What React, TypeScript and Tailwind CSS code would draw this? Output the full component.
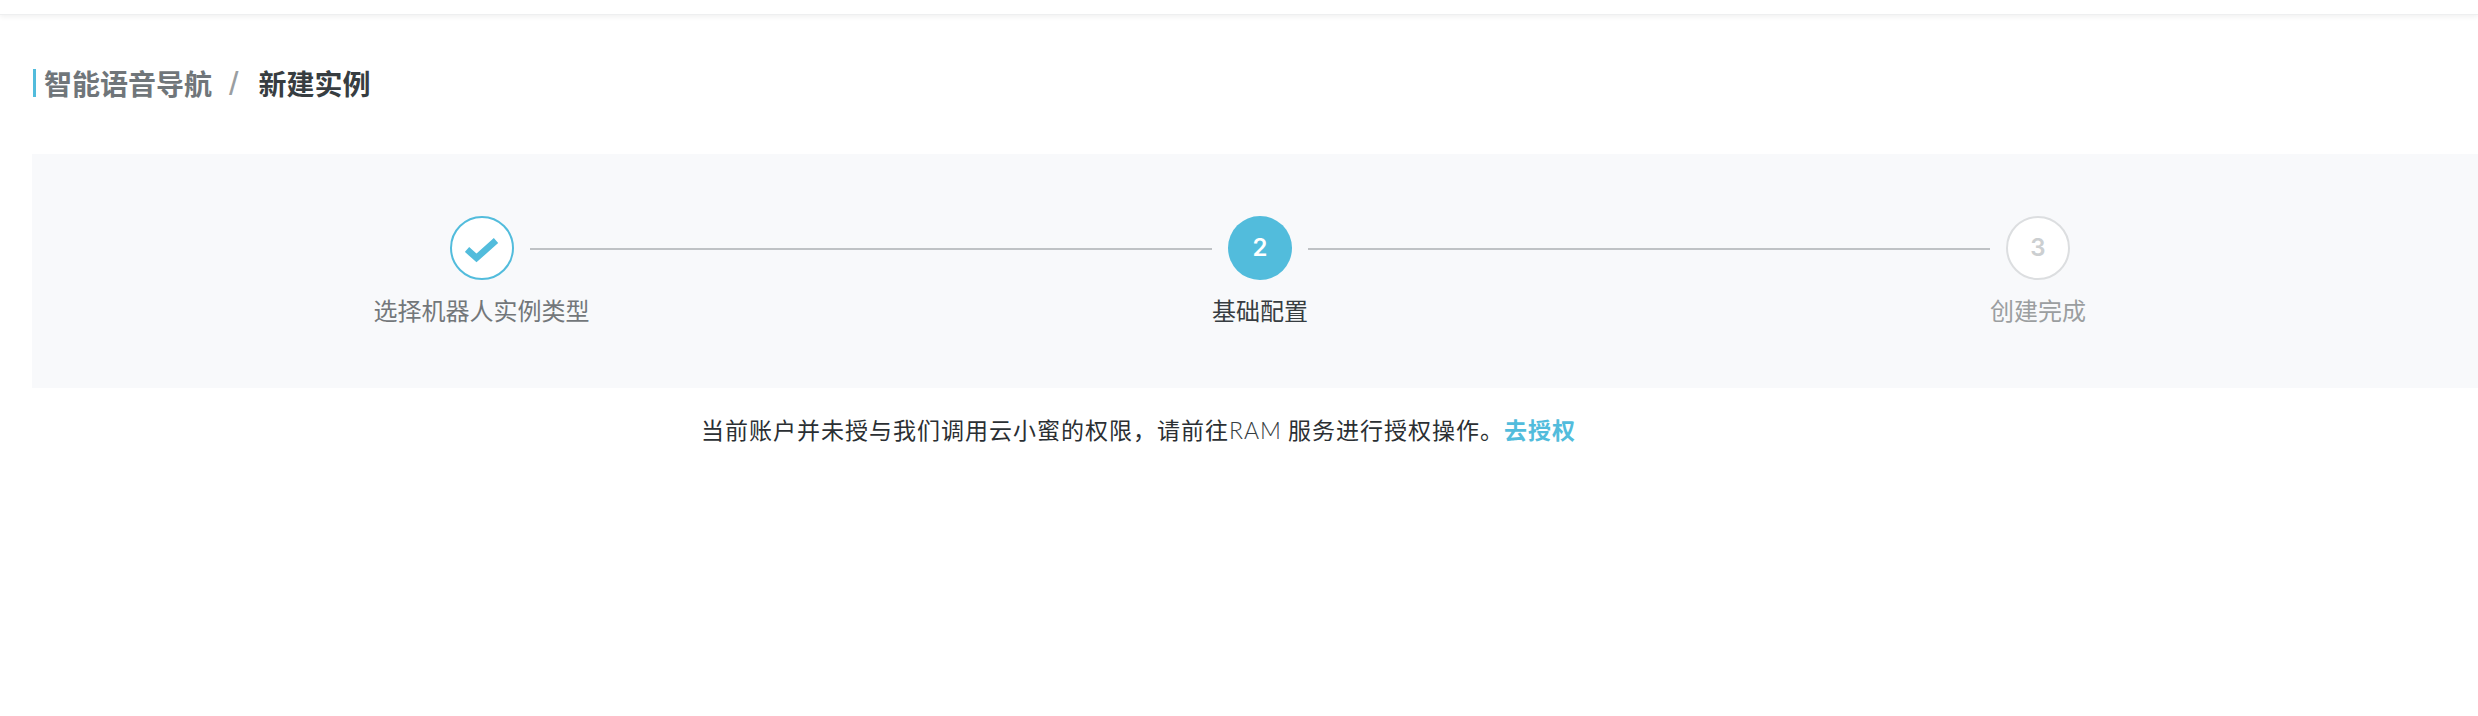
import React from 'react'

const cjk = "font-['Noto_Sans_CJK_SC','Liberation_Sans',sans-serif]"

function Line() {
  return <div className="mx-4 h-[2px] w-[682px] mt-[32px] bg-[#bfc2c5]" />
}

function Check() {
  return (
    <svg width="34" height="30" viewBox="0 0 34 30" fill="none">
      <path d="M2 16.5 L11.5 25 L31 7.5" stroke="#52bcdc" strokeWidth="6.5" />
    </svg>
  )
}

export default function App() {
  return (
    <div className={`${cjk} h-[716px] overflow-hidden bg-white`}>
      <div className="h-[15px] border-b border-[#eeeff0] bg-white shadow-[0_2px_5px_rgba(0,0,0,0.06)]" />

      {/* breadcrumb */}
      <div className="ml-[33px] mt-[54px] flex h-[28px] items-center border-l-[3px] border-[#52bcdc] pl-2 text-[28px] font-bold leading-none">
        <span className="-mt-[1px] text-[#70767a]">智能语音导航</span>
        <span className="ml-[17px] mr-[20px] font-['Liberation_Sans',sans-serif] text-[34px] font-normal text-[#9a9ea1]">/</span>
        <span className="-mt-[1px] text-[#373d41]">新建实例</span>
      </div>

      {/* steps */}
      <div className="ml-8 mt-[57px] h-[234px] w-[2456px] bg-[#f8f9fb] pt-[62px]">
        <div className="flex pl-[418px]">
          <div className="flex h-16 w-16 items-center justify-center rounded-full border-2 border-[#52bcdc] bg-white">
            <Check />
          </div>
          <Line />
          <div className="flex h-16 w-16 items-center justify-center rounded-full bg-[#52bcdc] font-['Inter',sans-serif] text-[24px] font-semibold text-white">
            2
          </div>
          <Line />
          <div className="flex h-16 w-16 items-center justify-center rounded-full border-2 border-[#dcdee0] bg-white font-['Inter',sans-serif] text-[24px] font-semibold text-[#cccfd1]">
            3
          </div>
        </div>
        <div className="mt-[14px] grid grid-cols-[778px_778px_778px] pl-[61px] text-center text-[24px] leading-[32px]">
          <div className="-ml-[1px] text-[#73777a]">选择机器人实例类型</div>
          <div className="text-[#373d41]">基础配置</div>
          <div className="text-[#9b9ea0]">创建完成</div>
        </div>
      </div>

      {/* message */}
      <div className="ml-[701px] mt-[23px] whitespace-nowrap text-[23px] leading-[36px] tracking-[1px] text-[#2b2f33]">
        当前账户并未授与我们调用云小蜜的权限，请前往<span className="font-['Lato',sans-serif] font-light text-[#373d41]">RAM</span> 服务进行授权操作。
        <a className="font-bold text-[#52bcdc]">去授权</a>
      </div>
    </div>
  )
}
